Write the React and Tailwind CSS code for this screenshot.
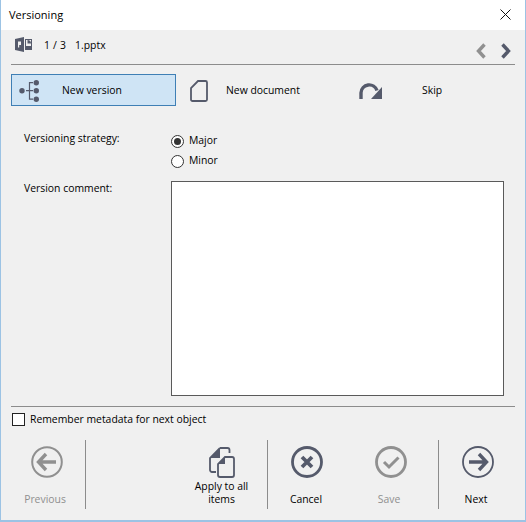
const font = { fontFamily: '"Open Sans", sans-serif' };

const Tab = ({ icon, label, active, labelClass }) => (
  <div
    className={`flex items-center h-[32px] border ${
      active ? "bg-[#cfe4f5] border-[#3f7fb5]" : "border-transparent"
    } w-[165px] shrink-0`}
  >
    <div className="w-[50px] flex justify-center shrink-0">{icon}</div>
    <span className={`pt-[2px] ${labelClass}`}>{label}</span>
  </div>
);

const Radio = ({ checked, label }) => (
  <div className="flex items-center h-[20px] gap-[5px]">
    <div className="w-[13px] h-[13px] rounded-full border border-[#333] bg-white flex items-center justify-center">
      {checked && <div className="w-[7px] h-[7px] rounded-full bg-[#333]" />}
    </div>
    <span>{label}</span>
  </div>
);

const Action = ({ icon, label, disabled, width, labelClass = "" }) => (
  <div className={`flex flex-col items-center h-[69px] shrink-0 ${width}`}>
    <div className="h-[32px] mt-[6px] flex items-center justify-center shrink-0">{icon}</div>
    <div
      className={`mt-auto mb-[3px] text-center leading-[13px] ${labelClass} ${
        disabled ? "text-[#8f8f8f]" : "text-black"
      }`}
    >
      {label}
    </div>
  </div>
);

const Sep = () => <div className="w-px h-[69px] bg-[#8c8c8c] shrink-0" />;

const dark = "#555a6b";
const grey = "#909090";

export default function App() {
  return (
    <div
      className="w-[526px] h-[522px] bg-[#f0f0f0] border-x border-b-2 border-[#9cc3e4] text-[10.4px] text-black flex flex-col overflow-hidden"
      style={font}
    >
      {/* Title bar */}
      <div className="h-[30px] bg-white flex items-center justify-between pl-[8px] pr-[14px] shrink-0">
        <span className="text-[11px]">Versioning</span>
        <svg width="11" height="11" viewBox="0 0 11 11" className="mt-[-2px]">
          <path d="M0.5 0.5 L10.5 10.5 M10.5 0.5 L0.5 10.5" stroke="#111" strokeWidth="1" />
        </svg>
      </div>

      {/* File row */}
      <div className="h-[35px] mx-[10px] pb-[2px] border-b border-[#8c8c8c] flex items-center shrink-0">
        <svg width="17" height="15" viewBox="0 0 17 15" className="ml-[4px] mb-[3px]">
          <path d="M0 2 L9 0 L9 15 L0 13 Z" fill={dark} />
          <path d="M10 2 H17 V13 H10 Z" fill={dark} />
          <path d="M11 3 H16 V9 H11 Z" fill="#f0f0f0" />
          <path d="M12.5 3 V6.5 H16 A3.5 3.5 0 0 0 12.5 3" fill={dark} />
          <path d="M3 4.5 H6 V8 H4.2 V10.5 H3 Z" fill="#f0f0f0" />
        </svg>
        <span className="ml-[12px] tracking-[0.2px]">1 / 3</span>
        <span className="ml-[9px]">1.pptx</span>
        <div className="ml-auto mr-[4px] flex items-center gap-[13px] mt-[10px]">
          <svg width="11" height="16" viewBox="0 0 11 16">
            <path d="M8.5 1.5 L2.5 8 L8.5 14.5" fill="none" stroke={grey} strokeWidth="3.4" />
          </svg>
          <svg width="11" height="16" viewBox="0 0 11 16">
            <path d="M2.5 1.5 L8.5 8 L2.5 14.5" fill="none" stroke={dark} strokeWidth="3.4" />
          </svg>
        </div>
      </div>

      {/* Tabs */}
      <div className="flex mt-[9px] ml-[10px] shrink-0">
        <Tab
          active
          label="New version"
          icon={
            <svg width="20" height="22" viewBox="0 0 20 22" className="ml-[-16px] mt-[2px]">
              <circle cx="3" cy="10.7" r="2.7" fill={dark} />
              <circle cx="17.3" cy="2.7" r="2.7" fill={dark} />
              <circle cx="17.3" cy="10.7" r="2.7" fill={dark} />
              <circle cx="17.3" cy="19.2" r="2.7" fill={dark} />
              <path d="M14 2.7 H10.5 V19.2 H14 M7 10.7 H14" fill="none" stroke={dark} strokeWidth="1.2" />
            </svg>
          }
        />
        <Tab
          label="New document"
          labelClass="ml-[-1px]"
          icon={
            <svg width="18" height="22" viewBox="0 0 18 22" className="ml-[-6px] mt-[2px]">
              <path
                d="M8 1 H15.5 A1.5 1.5 0 0 1 17 2.5 V19.5 A1.5 1.5 0 0 1 15.5 21 H2.5 A1.5 1.5 0 0 1 1 19.5 V8 Z"
                fill="none"
                stroke={dark}
                strokeWidth="1.8"
              />
            </svg>
          }
        />
        <Tab
          label="Skip"
          labelClass="ml-[30px]"
          icon={
            <svg width="23" height="16" viewBox="0 0 23 16" className="ml-[6px] mt-[2px]">
              <path d="M2 16 V9.8 A8.2 8.2 0 0 1 18 7.6" fill="none" stroke={dark} strokeWidth="3.4" />
              <path d="M23 4 V16 H12 Z" fill={dark} />
            </svg>
          }
        />
      </div>

      {/* Form */}
      <div className="grid grid-cols-[147px_333px] ml-[23px] mt-[25px] shrink-0">
        <div className="mt-[-1px] leading-[16px]">Versioning strategy:</div>
        <div>
          <Radio checked label="Major" />
          <Radio label="Minor" />
        </div>
        <div className="mt-[9px] leading-[16px]">Version comment:</div>
        <div className="mt-[10px] h-[215px] bg-white border border-[#5a5a5a]" />
      </div>

      {/* Remember */}
      <div className="mx-[10px] mt-[10px] border-t border-[#8c8c8c] flex items-center h-[26px] shrink-0">
        <div className="w-[13px] h-[13px] border border-[#222] bg-white shrink-0 ml-px" />
        <span className="ml-[5px]">Remember metadata for next object</span>
      </div>

      {/* Actions */}
      <div className="flex items-start ml-[10px] mt-[8px] shrink-0">
        <Action
          disabled
          width="w-[74px]"
          labelClass="mr-[6px]"
          label="Previous"
          icon={
            <svg width="32" height="32" viewBox="0 0 32 32" className="mr-[2px]">
              <circle cx="16" cy="16" r="14.8" fill="none" stroke={grey} strokeWidth="2" />
              <path d="M15 8 L7.5 16 L15 24 M8.5 16 H25" fill="none" stroke={grey} strokeWidth="3.4" />
            </svg>
          }
        />
        <Sep />
        <div className="w-[90px] shrink-0" />
        <Action
          width="w-[91px]"
          label={
            <>
              Apply to all
              <br />
              items
            </>
          }
          icon={
            <svg width="26" height="31" viewBox="0 0 26 31">
              <path d="M11 1 H18.5 A2 2 0 0 1 20.5 3 V6 M7 25 H3 A2 2 0 0 1 1 23 V11 L11 1" fill="none" stroke={dark} strokeWidth="1.8" />
              <path d="M1 11 L11 1 V11 Z" fill={dark} />
              <path d="M16 10 H23 A2 2 0 0 1 25 12 V28 A2 2 0 0 1 23 30 H11 A2 2 0 0 1 9 28 V17 Z" fill="#f0f0f0" stroke={dark} strokeWidth="1.8" />
              <path d="M9 17 L16 10 V17 Z" fill={dark} />
            </svg>
          }
        />
        <Sep />
        <Action
          width="w-[76px]"
          label="Cancel"
          icon={
            <svg width="32" height="32" viewBox="0 0 32 32" className="ml-[2px]">
              <circle cx="16" cy="16" r="14.5" fill="none" stroke={dark} strokeWidth="2.8" />
              <path d="M11 11 L21 21 M21 11 L11 21" stroke={dark} strokeWidth="3.8" />
            </svg>
          }
        />
        <Action
          disabled
          width="w-[94px] pr-[4px]"
          label="Save"
          icon={
            <svg width="32" height="32" viewBox="0 0 32 32" className="ml-[4px]">
              <circle cx="16" cy="16" r="14.5" fill="none" stroke={grey} strokeWidth="2.8" />
              <path d="M9 16 L14 21 L23.5 11.5" fill="none" stroke={grey} strokeWidth="3" />
            </svg>
          }
        />
        <Sep />
        <Action
          width="w-[74px]"
          label="Next"
          icon={
            <svg width="32" height="32" viewBox="0 0 32 32" className="ml-[4px]">
              <circle cx="16" cy="16" r="15" fill="none" stroke={dark} strokeWidth="1.8" />
              <path d="M17 8 L24.5 16 L17 24 M23.5 16 H7" fill="none" stroke={dark} strokeWidth="3.4" />
            </svg>
          }
        />
      </div>
    </div>
  );
}
